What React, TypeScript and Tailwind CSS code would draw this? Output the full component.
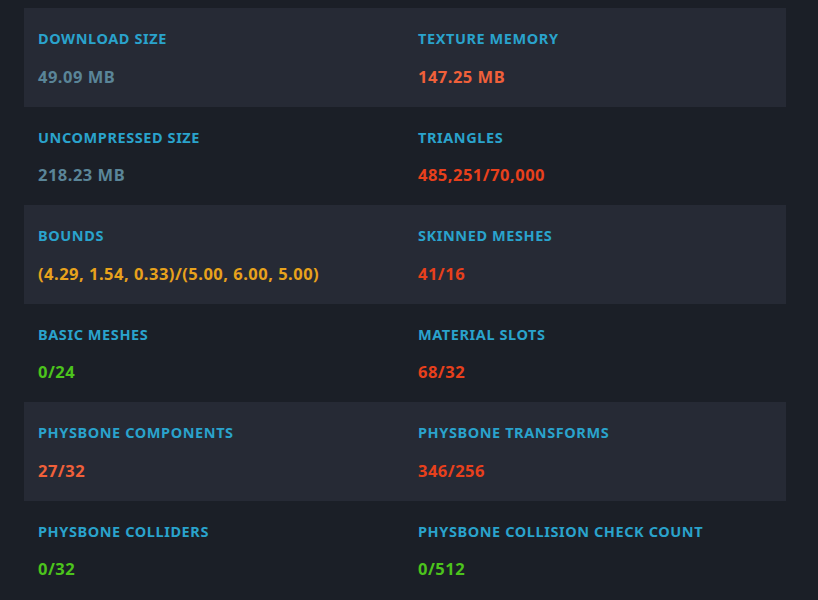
const rows: [string, string, string, string, string, string][] = [
  ["DOWNLOAD SIZE", "49.09 MB", "text-[#5a8598]", "TEXTURE MEMORY", "147.25 MB", "text-[#f0603a]"],
  ["UNCOMPRESSED SIZE", "218.23 MB", "text-[#5a8598]", "TRIANGLES", "485,251/70,000", "text-[#e8401c]"],
  ["BOUNDS", "(4.29, 1.54, 0.33)/(5.00, 6.00, 5.00)", "text-[#e8a21c]", "SKINNED MESHES", "41/16", "text-[#e8401c]"],
  ["BASIC MESHES", "0/24", "text-[#4cc41c]", "MATERIAL SLOTS", "68/32", "text-[#e8401c]"],
  ["PHYSBONE COMPONENTS", "27/32", "text-[#f0603a]", "PHYSBONE TRANSFORMS", "346/256", "text-[#e8401c]"],
  ["PHYSBONE COLLIDERS", "0/32", "text-[#4cc41c]", "PHYSBONE COLLISION CHECK COUNT", "0/512", "text-[#4cc41c]"],
];

export default function App() {
  return (
    <div className="w-[818px] h-[600px] bg-[#1b1f27] pt-2 pl-6 pr-8 overflow-hidden [font-family:'DejaVu_Sans',Verdana,sans-serif] font-bold">
      {rows.map((r, i) => (
        <div key={i} className={`grid grid-cols-2 h-[98.5px] pl-[14px] pt-[20px] ${i % 2 === 0 ? "bg-[#262a35]" : ""}`}>
          <div>
            <div className="text-[14.5px] tracking-[0.04em] text-[#2aa3cc]">{r[0]}</div>
            <div className={`mt-[15px] text-[16.5px] tracking-[0.03em] ${r[2]}`}>{r[1]}</div>
          </div>
          <div className="pl-[6px]">
            <div className="text-[14.5px] tracking-[0.04em] text-[#2aa3cc]">{r[3]}</div>
            <div className={`mt-[15px] text-[16.5px] tracking-[0.03em] ${r[5]}`}>{r[4]}</div>
          </div>
        </div>
      ))}
    </div>
  );
}
